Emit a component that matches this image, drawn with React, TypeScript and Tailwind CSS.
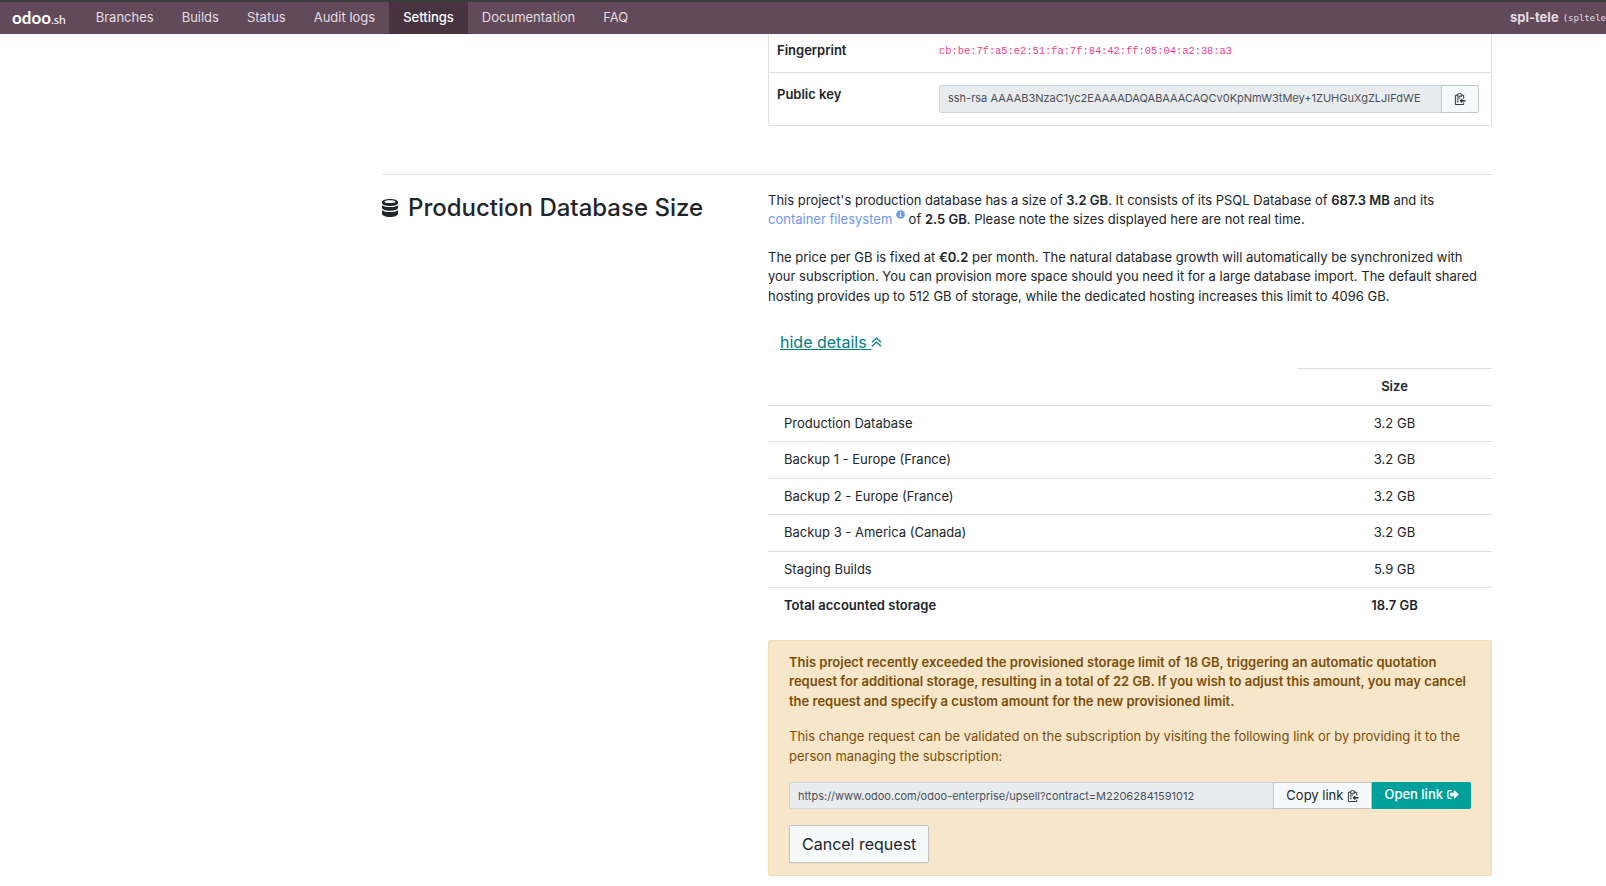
import React, { useState } from 'react';

import { FaInfoCircle } from 'react-icons/fa';

interface NavItem {
    label: string;
    active?: boolean;
}

interface SizeRow {
    name: string;
    size: string;
}

const navItems: NavItem[] = [
    { label: 'Branches' },
    { label: 'Builds' },
    { label: 'Status' },
    { label: 'Audit logs' },
    { label: 'Settings', active: true },
    { label: 'Documentation' },
    { label: 'FAQ' },
];

const sizeRows: SizeRow[] = [
    { name: 'Production Database', size: '3.2 GB' },
    { name: 'Backup 1 - Europe (France)', size: '3.2 GB' },
    { name: 'Backup 2 - Europe (France)', size: '3.2 GB' },
    { name: 'Backup 3 - America (Canada)', size: '3.2 GB' },
    { name: 'Staging Builds', size: '5.9 GB' },
];

const publicKey = 'ssh-rsa AAAAB3NzaC1yc2EAAAADAQABAAACAQCv0KpNmW3tMey+1ZUHGuXgZLJIFdWE';
const quotationUrl = 'https://www.odoo.com/odoo-enterprise/upsell?contract=M22062841591012';

function ClipboardIcon() {
    return (
        <svg viewBox="0 0 13 13" className="inline-block size-3 shrink-0" fill="none" stroke="currentColor" aria-hidden="true">
            <path d="M3.500 2.500h-2v10h9v-2M10.500 6V2.500h-2" />
            <path d="M3.500 3.500v-2h1.200a1.300 1.300 0 0 1 2.600 0h1.200v2z" />
            <path d="M3 5.500h4M3 7.500h2M3 9.500h2" />
            <path d="M12.500 8.500H7" strokeWidth="1.500" />
            <path d="M6 8.500 9 6v5z" fill="currentColor" stroke="none" />
        </svg>
    );
}

function SignOutIcon() {
    return (
        <svg viewBox="0 0 13 11" className="inline-block h-[11px] w-3 shrink-0" aria-hidden="true">
            <path d="M4.500 1.200H2.600A1.600 1.600 0 0 0 1 2.800v5.400a1.600 1.600 0 0 0 1.600 1.600h1.900" fill="none" stroke="currentColor" strokeWidth="1.400" strokeLinecap="round" />
            <path d="M4 3.700h3.500V1.400q0-.8.7-.3l4.300 4q.4.400 0 .8l-4.300 4q-.7.500-.7-.3V7.300H4q-.5 0-.5-.5V4.200q0-.5.500-.5z" fill="currentColor" />
        </svg>
    );
}

function DatabaseIcon() {
    return (
        <svg viewBox="0 0 16 18" className="h-[18px] w-4 shrink-0" fill="currentColor" aria-hidden="true">
            <path fillRule="evenodd" d="M8 0c4.400 0 8 1.200 8 2.800v1.400c0 1.500-3.600 2.700-8 2.700S0 5.700 0 4.200V2.800C0 1.200 3.600 0 8 0zm0 1.300c-3.300 0-5.600.6-5.600 1.400s2.300 1.400 5.600 1.400 5.600-.6 5.600-1.400-2.300-1.400-5.600-1.400z" />
            <path d="M0 6.200c1.700 1.300 4.800 1.800 8 1.800s6.300-.5 8-1.800v2.800c0 1.500-3.600 2.800-8 2.800S0 10.500 0 9z" />
            <path d="M0 11.200c1.700 1.300 4.800 1.800 8 1.800s6.300-.5 8-1.800v3.500C16 16.500 12.400 18 8 18s-8-1.500-8-3.300z" />
        </svg>
    );
}

function DoubleUpIcon() {
    return (
        <svg viewBox="0 0 11 10" className="h-2.5 w-[11px] shrink-0" fill="none" stroke="currentColor" strokeWidth="1.300" aria-hidden="true">
            <path d="m1 5.300 4.500-4.200L10 5.300M1 9.300l4.500-4.200L10 9.300" />
        </svg>
    );
}

function TopBar() {
    return (
        <header className="flex h-[34px] items-stretch overflow-hidden border-t-2 border-[#3b3b3b] bg-[#624a5b] text-[13px] text-[#e3dde1]">
            <a href="#" className="flex items-center pr-4 pl-3 font-['Lato',sans-serif] text-white">
                <span className="text-[17px] font-bold">odoo</span>
                <span className="pt-1 text-xs">.sh</span>
            </a>
            <nav className="flex">
                {navItems.map((item) => (
                    <a
                        key={item.label}
                        href={`#${item.label.toLowerCase()}`}
                        className={`flex items-center px-3.5 ${item.active ? 'bg-[#46333f] font-medium text-white' : 'hover:text-white'}`}
                    >
                        {item.label}
                    </a>
                ))}
            </nav>
            <div className="ml-auto flex items-center gap-1 whitespace-nowrap">
                <span className="font-bold">spl-tele</span>
                <span className="pt-0.5 font-['DejaVu_Sans_Mono',monospace] text-[9px]">(spltele</span>
            </div>
        </header>
    );
}

function DeployKey() {
    return (
        <dl className="ml-[386px] rounded-b-xs border border-t-0 border-[#dee2e6]">
            <div className="flex border-b border-[#dee2e6] px-2 pt-[7px] pb-[11px]">
                <dt className="w-[162px] shrink-0 font-semibold">Fingerprint</dt>
                <dd className="font-['Liberation_Mono',monospace] text-[#e83e8c]">
                    <small>cb:be:7f:a5:e2:51:fa:7f:84:42:ff:05:04:a2:38:a3</small>
                </dd>
            </div>
            <div className="flex px-2 py-3">
                <dt className="w-[162px] shrink-0 font-semibold">
                    <label htmlFor="public-key">Public key</label>
                </dt>
                <dd className="flex h-7 min-w-0 flex-1 pr-1">
                    <input
                        id="public-key"
                        readOnly
                        value={publicKey}
                        className="min-w-0 flex-1 rounded-l-xs border border-[#ced4da] bg-[#e9ecef] px-2 text-[11px] text-[#495057]"
                    />
                    <button aria-label="Copy public key" className="-ml-px flex w-[38px] items-center justify-center rounded-r-xs border border-[#c0c5c8] bg-[#f6f9fa]">
                        <ClipboardIcon />
                    </button>
                </dd>
            </div>
        </dl>
    );
}

function SizeTable() {
    return (
        <table className="w-full border-collapse">
            <thead>
                <tr>
                    <td className="px-4 py-2"></td>
                    <th className="w-[195px] border-t border-[#dee2e6] px-4 py-2 text-center font-semibold">Size</th>
                </tr>
            </thead>
            <tbody>
                {sizeRows.map((row) => (
                    <tr key={row.name} className="border-t border-[#dee2e6]">
                        <td className="px-4 py-2">{row.name}</td>
                        <td className="px-4 py-2 text-center">{row.size}</td>
                    </tr>
                ))}
                <tr className="border-t border-[#dee2e6] font-semibold">
                    <td className="px-4 py-2">Total accounted storage</td>
                    <td className="px-4 py-2 text-center">18.7 GB</td>
                </tr>
            </tbody>
        </table>
    );
}

function StorageAlert() {
    return (
        <div className="mt-4 rounded-xs border border-[#f7dbb3] bg-[#f8e6ca] px-5 py-3 text-[#7a4f0a]">
            <p className="mb-4 font-semibold">
                This project recently exceeded the provisioned storage limit of 18 GB, triggering an automatic quotation
                request for additional storage, resulting in a total of 22 GB. If you wish to adjust this amount, you may cancel
                the request and specify a custom amount for the new provisioned limit.
            </p>
            <p className="mb-4">
                This change request can be validated on the subscription by visiting the following link or by providing it to the
                person managing the subscription:
            </p>
            <div className="mb-4 flex h-[27px]">
                <input
                    aria-label="Quotation link"
                    readOnly
                    value={quotationUrl}
                    className="min-w-0 flex-1 rounded-l-xs border border-[#ced4da] bg-[#e9ecef] px-2 text-[11px] text-[#495057]"
                />
                <button className="-ml-px flex items-center gap-1 border border-[#c0c5c8] bg-[#f6f9fa] px-3 text-[#212529]">
                    Copy link
                    <ClipboardIcon />
                </button>
                <a href={quotationUrl} className="flex items-center gap-1 rounded-r-xs bg-[#00a09d] px-3 pb-0.5 font-medium text-white">
                    Open link
                    <SignOutIcon />
                </a>
            </div>
            <button className="h-[38px] rounded-xs border border-[#c0c5c8] bg-[#f6f9fa] px-3 text-base text-[#212529] shadow-xs">
                Cancel request
            </button>
        </div>
    );
}

function App() {
    const [showDetails, setShowDetails] = useState<boolean>(true);

    return (
        <div className="bg-white font-['Inter',sans-serif] text-[13px] leading-normal text-[#212529]">
            <TopBar />
            <main className="mr-[114px] ml-[382px] pb-2.5">
                <DeployKey />
                <section className="mt-12 flex border-t border-[#dee2e6] pt-4">
                    <div className="w-[386px] shrink-0">
                        <h2 className="flex items-center gap-2.5 text-2xl leading-[34px] font-medium">
                            <DatabaseIcon />
                            Production Database Size
                        </h2>
                    </div>
                    <div className="min-w-0 flex-1">
                        <p>
                            This project's production database has a size of <b className="font-semibold">3.2 GB</b>. It consists of its PSQL
                            Database of <b className="font-semibold">687.3 MB</b> and its{' '}
                            <a href="#filesystem" className="text-[#6f96ee]">
                                container filesystem <FaInfoCircle className="inline-block size-[9px] align-super" />
                            </a>{' '}
                            of <b className="font-semibold">2.5 GB</b>. Please note the sizes displayed here are not real time.
                        </p>
                        <p className="mt-[18px]">
                            The price per GB is fixed at <b className="font-semibold">€0.2</b> per month. The natural database growth will
                            automatically be synchronized with your subscription. You can provision more space should you need it for a
                            large database import. The default shared hosting provides up to 512 GB of storage, while the dedicated
                            hosting increases this limit to 4096 GB.
                        </p>
                        <button className="mt-6 mb-3.5 ml-3 flex items-center text-base text-[#017e84]" onClick={() => setShowDetails(!showDetails)}>
                            <span className="whitespace-pre underline">hide details </span>
                            <DoubleUpIcon />
                        </button>
                        {showDetails && <SizeTable />}
                        <StorageAlert />
                    </div>
                </section>
            </main>
        </div>
    );
}

export default App;
